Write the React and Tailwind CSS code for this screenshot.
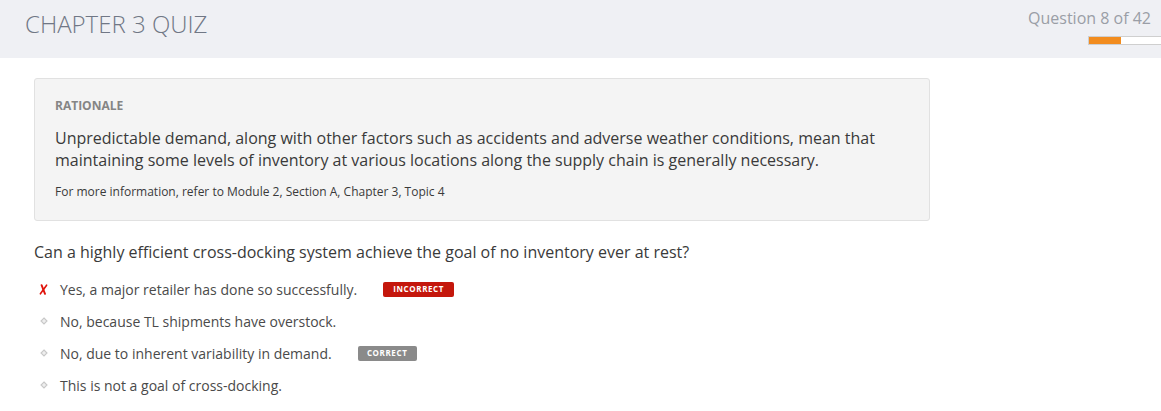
import React from 'react';

const options = [
  { text: 'Yes, a major retailer has done so successfully.', picked: true, badge: 'INCORRECT' },
  { text: 'No, because TL shipments have overstock.' },
  { text: 'No, due to inherent variability in demand.', badge: 'CORRECT' },
  { text: 'This is not a goal of cross-docking.' },
];

const Bullet = () => (
  <svg width="8" height="8" viewBox="0 0 8 8" className="block">
    <path d="M4 1 L7 4 L4 7 L1 4 Z" fill="#eeeeee" stroke="#c8c8c8" strokeWidth="1.1" />
  </svg>
);

const Cross = () => (
  <svg width="9" height="11" viewBox="0 0 9 11" className="block">
    <path d="M2.6 1.2 L6 9.8" stroke="#e0140c" strokeWidth="1.9" strokeLinecap="round" fill="none" />
    <path d="M7.6 1.2 L1.4 9.8" stroke="#e0140c" strokeWidth="1.6" strokeLinecap="round" fill="none" />
  </svg>
);

const App = () => {
  return (
    <div className="min-h-[411px] bg-white text-[#333] font-['Open_Sans',sans-serif]">
      {/* Cabecera */}
      <header className="h-[58px] bg-[#eff0f4] flex justify-between pl-[25px] pr-[10px]">
        <h1 className="text-[24px] font-light text-[#707785] leading-none pt-[12px]">
          CHAPTER 3 QUIZ
        </h1>
        <div className="flex flex-col items-end pt-[8px] mr-[-10px]">
          <span className="text-[16px] text-[#9a9ea6] leading-[20px] pr-[10px]">Question 8 of 42</span>
          <div className="mt-[8px] w-[73px] h-[9px] border border-[#cfcfcf] border-r-0 bg-white">
            <div className="h-full w-[32px] bg-[#f28c1e]"></div>
          </div>
        </div>
      </header>

      <main className="pl-[34px] pt-[20px]">
        {/* Tarjeta de rationale */}
        <div className="w-[896px] h-[143px] bg-[#f4f4f4] border border-[#e1e1e1] rounded-[3px] pl-[20px] pt-[19px]">
          <p className="text-[12px] font-bold text-[#858585] leading-[16px]">RATIONALE</p>
          <p className="mt-[13px] text-[16px] leading-[22px] text-[#3a3a3a]">
            Unpredictable demand, along with other factors such as accidents and adverse weather conditions, mean that
            <br />
            maintaining some levels of inventory at various locations along the supply chain is generally necessary.
          </p>
          <p className="mt-[13px] text-[12px] leading-[16px] text-[#3a3a3a]">
            For more information, refer to Module 2, Section A, Chapter 3, Topic 4
          </p>
        </div>

        <p className="mt-[19px] text-[16px] leading-[24px] text-[#3a3a3a]">
          Can a highly efficient cross-docking system achieve the goal of no inventory ever at rest?
        </p>

        <ul className="mt-[9px] flex flex-col">
          {options.map((o) => (
            <li key={o.text} className="h-[32px] flex items-center text-[14px] text-[#4a4a4a]">
              <span className="w-[26px] flex justify-center pr-[8px] pl-[1px]">
                {o.picked ? <Cross /> : <Bullet />}
              </span>
              <span>{o.text}</span>
              {o.badge && (
                <span
                  className={
                    o.badge === 'INCORRECT'
                      ? 'ml-[26px] w-[71px] h-[15px] rounded-[2px] bg-[#c4170c] text-white text-[8px] font-bold tracking-[0.6px] flex items-center justify-center'
                      : 'ml-[26px] w-[59px] h-[15px] rounded-[2px] bg-[#8a8a8a] text-white text-[8px] font-bold tracking-[0.6px] flex items-center justify-center'
                  }
                >
                  {o.badge}
                </span>
              )}
            </li>
          ))}
        </ul>
      </main>
    </div>
  );
};

export default App;
